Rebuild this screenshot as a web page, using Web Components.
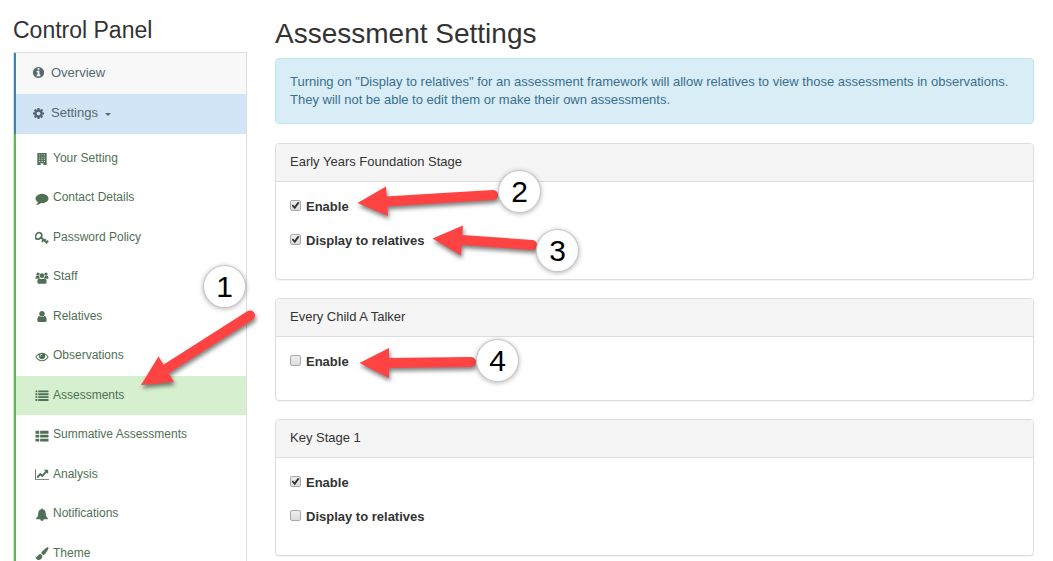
<!DOCTYPE html>
<html lang="en">
<head>
<meta charset="utf-8">
<meta name="viewport" content="width=device-width, initial-scale=1">
<title>Assessment Settings</title>
<style>
  html { scrollbar-width: none; }
  body { margin: 0; background: #fff; color: #333; font: 13px/18px "Liberation Sans", Arial, sans-serif; }
</style>
</head>
<body>
<settings-page>
  <side-nav slot="side" heading="Control Panel">
    <nav-item icon="info">Overview</nav-item>
    <nav-item icon="cog" open>Settings</nav-item>
    <sub-item slot="sub" icon="building">Your Setting</sub-item>
    <sub-item slot="sub" icon="comment">Contact Details</sub-item>
    <sub-item slot="sub" icon="key">Password Policy</sub-item>
    <sub-item slot="sub" icon="users">Staff</sub-item>
    <sub-item slot="sub" icon="user">Relatives</sub-item>
    <sub-item slot="sub" icon="eye">Observations</sub-item>
    <sub-item slot="sub" icon="list" current>Assessments</sub-item>
    <sub-item slot="sub" icon="thlist">Summative Assessments</sub-item>
    <sub-item slot="sub" icon="chart">Analysis</sub-item>
    <sub-item slot="sub" icon="bell">Notifications</sub-item>
    <sub-item slot="sub" icon="brush">Theme</sub-item>
  </side-nav>
  <page-title>Assessment Settings</page-title>
  <info-alert>Turning on "Display to relatives" for an assessment framework will allow relatives to view those assessments in observations. They will not be able to edit them or make their own assessments.</info-alert>
  <settings-panel heading="Early Years Foundation Stage">
    <check-row checked>Enable</check-row>
    <check-row checked>Display to relatives</check-row>
  </settings-panel>
  <settings-panel heading="Every Child A Talker">
    <check-row>Enable</check-row>
  </settings-panel>
  <settings-panel heading="Key Stage 1">
    <check-row checked>Enable</check-row>
    <check-row>Display to relatives</check-row>
  </settings-panel>
  <callout-layer slot="overlay">
    <callout-badge style="left:204px;top:266px">1</callout-badge>
    <callout-badge style="left:499px;top:171px">2</callout-badge>
    <callout-badge style="left:537px;top:230px">3</callout-badge>
    <callout-badge style="left:477px;top:340px">4</callout-badge>
  </callout-layer>
</settings-page>

<script>
const ICONS = {
  info: ['0 0 1792 1792', '<path d="M1152 1376v-160q0-14-9-23t-23-9h-96v-512q0-14-9-23t-23-9h-320q-14 0-23 9t-9 23v160q0 14 9 23t23 9h96v320h-96q-14 0-23 9t-9 23v160q0 14 9 23t23 9h448q14 0 23-9t9-23zm-128-896v-160q0-14-9-23t-23-9h-192q-14 0-23 9t-9 23v160q0 14 9 23t23 9h192q14 0 23-9t9-23zm640 416q0 209-103 385.500t-279.500 279.500-385.500 103-385.500-103-279.500-279.500-103-385.500 103-385.500 279.500-279.500 385.500-103 385.500 103 279.500 279.500 103 385.500z"/>'],
  cog: ['0 0 1792 1792', '<path d="M1152 896q0-106-75-181t-181-75-181 75-75 181 75 181 181 75 181-75 75-181zm512-109v222q0 12-8 23t-20 13l-185 28q-19 54-39 91 35 50 107 138 10 12 10 25t-9 23q-27 37-99 108t-94 71q-12 0-26-9l-138-108q-44 23-91 38-16 136-29 186-7 28-36 28h-222q-14 0-24.500-8.500t-11.500-21.500l-28-184q-49-16-90-37l-141 107q-10 9-25 9-14 0-25-11-126-114-165-168-7-10-7-23 0-12 8-23 15-21 51-66.500t54-70.500q-27-50-41-99l-183-27q-13-2-21-12.500t-8-23.500v-222q0-12 8-23t19-13l186-28q14-46 39-92-40-57-107-138-10-12-10-24 0-10 9-23 26-36 98.500-107.500t94.500-71.500q13 0 26 10l138 107q44-23 91-38 16-136 29-186 7-28 36-28h222q14 0 24.500 8.500t11.500 21.500l28 184q49 16 90 37l142-107q9-9 24-9 13 0 25 10 129 119 165 170 7 8 7 22 0 12-8 23-15 21-51 66.500t-54 70.500q26 50 41 98l183 28q13 2 21 12.500t8 23.500z"/>'],
  comment: ['0 0 1792 1792', '<path d="M1792 896q0 174-120 321.500t-326 233-450 85.500q-70 0-145-8-198 175-460 242-49 14-114 22-17 2-30.500-9t-17.500-29v-1q-3-4-.5-12t2-10 4.500-9.500l6-9 7-8.500 8-9q7-8 31-34.500t34.500-38 31-39.500 32.500-51 27-59 26-76q-157-89-247.500-220t-90.500-281q0-130 71-248.500t191-204.500 286-136.500 348-50.500q244 0 450 85.500t326 233 120 321.500z"/>'],
  user: ['0 0 1792 1792', '<path d="M1536 1399q0 109-62.500 187t-150.500 78h-854q-88 0-150.500-78t-62.500-187q0-85 8.500-160.500t31.500-152 58.500-131 94-89 134.500-34.500q131 128 313 128t313-128q76 0 134.500 34.500t94 89 58.500 131 31.500 152 8.500 160.500zm-256-887q0 159-112.500 271.500t-271.500 112.500-271.500-112.500-112.500-271.500 112.500-271.500 271.500-112.500 271.500 112.500 112.500 271.500z"/>'],
  eye: ['0 0 1792 1792', '<path d="M1664 960q-152-236-381-353 61 104 61 225 0 185-131.500 316.500t-316.500 131.500-316.500-131.500-131.500-316.500q0-121 61-225-229 117-381 353 133 205 333.500 326.500t434.500 121.500 434.500-121.500 333.500-326.500zm-720-384q0-20-14-34t-34-14q-125 0-214.500 89.500t-89.500 214.500q0 20 14 34t34 14 34-14 14-34q0-86 61-147t147-61q20 0 34-14t14-34zm848 384q0 34-20 69-140 230-376.500 368.500t-499.500 138.500-499.500-139-376.500-368q-20-35-20-69t20-69q140-229 376.500-368t499.500-139 499.500 139 376.500 368q20 35 20 69z"/>'],
  building: ['0 0 14 14', '<path fill-rule="evenodd" d="M2 1h10v13H8.500v-2h-3v2H2zM4 2.600v1h1v-1zm2.500 0v1h1v-1zm2.500 0v1h1v-1zM4 5v1h1V5zm2.500 0v1h1V5zM9 5v1h1V5zM4 7.400v1h1v-1zm2.500 0v1h1v-1zm2.500 0v1h1v-1zM4 9.800v1h1v-1zm2.500 0v1h1v-1zm2.500 0v1h1v-1z"/>'],
  key: ['1 1 13 12', '<g fill="none" stroke="currentColor"><path stroke-width="1.600" d="M1.600 7.600C.9 5.800 2 3.200 3.800 2.600c1.700-.6 3.300.4 3.500 1.900.2 1.900-1.500 3.800-3.200 4-1.200.2-2.200-.1-2.500-.9z"/><path stroke-width="1.700" d="M6.300 6.700l6 5.600M9 9.300l-1.600 1.700M11 8.600l-1.600 1.700M13.200 9.800l-1.700 1.900"/></g>'],
  users: ['0 0 14 14', '<circle cx="2.700" cy="3.300" r="1.800"/><circle cx="11.300" cy="3.300" r="1.800"/><path d="M0 8.200C0 5.500.8 5 1.600 5c.9.500 1.700.5 2.400.3 0 1 .2 1.500.7 2.200-.8 0-1.500.3-2 .9H.8c-.5 0-.8 0-.8-.2zM14 8.200c0-2.700-.8-3.200-1.600-3.200-.9.500-1.700.5-2.400.3 0 1-.2 1.500-.7 2.200.8 0 1.500.3 2 .9h1.900c.5 0 .8 0 .8-.2z"/><circle cx="7" cy="5" r="2.500"/><path d="M4.300 7.800c1.600 1.200 3.800 1.200 5.400 0 1.400 0 2.300 1.500 2.300 4 0 1.200-.7 1.900-1.800 1.900H3.800C2.700 13.700 2 13 2 11.800c0-2.500.9-4 2.300-4z"/>'],
  list: ['0 0 14 14', '<path d="M0 1.500h2v2H0zM3 1.500h11v2H3zM0 4.600h2v2H0zM3 4.600h11v2H3zM0 7.700h2v2H0zM3 7.700h11v2H3zM0 10.800h2v2H0zM3 10.800h11v2H3z"/>'],
  thlist: ['0 0 14 14', '<path d="M0 2h4v3H0zM5 2h9v3H5zM0 6.200h4v3H0zM5 6.200h9v3H5zM0 10.400h4v3H0zM5 10.400h9v3H5z"/>'],
  chart: ['0 0 16 14', '<path d="M0 1h1v11h15v1H0z"/><path d="M2.500 10.500L6 6.500l2.300 2.200 4.500-5" fill="none" stroke="currentColor" stroke-width="2.200"/><path d="M10 1.500H15V6.500z"/>'],
  bell: ['0 0 14 14', '<path d="M7 .3c.6 0 .9.400.8 1.100 2 .4 3.200 2 3.200 4.100 0 3 .8 4.500 2.500 5.900 0 .5-.4.800-.9.800H8.800c0 1-.8 1.700-1.800 1.700s-1.800-.7-1.800-1.700H1.400c-.5 0-.9-.3-.9-.8C2.200 10 3 8.500 3 5.500c0-2.100 1.200-3.700 3.200-4.100C6.100.7 6.400.3 7 .3z"/>'],
  brush: ['0 0 14 14', '<path d="M12.800.2c.8 0 1.300.5 1.200 1.200-.2.900-2.700 5.300-4 6.400-.8.700-1.500.8-2.200.6L6.200 6.800c0-.7.200-1.200.9-1.900C8.500 3.700 12 .2 12.800.2zM5.600 7.500l1.800 1.900c.1 2.400-1.200 4.300-3.700 4.500C1.400 14 .3 12.600 0 10.200c.7.500 1.300.7 1.800.3.800-2 2-3 3.800-3z"/>']
};
const icon = n => `<svg class="icon" viewBox="${ICONS[n][0]}" fill="currentColor" aria-hidden="true">${ICONS[n][1]}</svg>`;

class Base extends HTMLElement {
  connectedCallback() {
    if (!this.shadowRoot) this.attachShadow({ mode: 'open' }).innerHTML = this.view();
  }
}

customElements.define('settings-page', class extends Base {
  view() { return `<style>
    :host { display: grid; grid-template-columns: 234px minmax(0, 1fr); column-gap: 28px; padding: 18px 19px 0 13px; position: relative; }
    main { padding-top: 1px; }
  </style><slot name="side"></slot><main><slot></slot></main><slot name="overlay"></slot>`; }
});

customElements.define('side-nav', class extends Base {
  view() { return `<style>
    :host { display: block; }
    h2 { margin: 0 0 10px; font-size: 23px; line-height: 24px; font-weight: 400; }
    nav { border: 1px solid #ddd; }
    .top { display: grid; grid-template-rows: 41px 40px; border-left: 2px solid #3a87ad; }
    .sub { display: grid; grid-auto-rows: 39px 40px; padding: 5px 0; border-left: 2px solid #5cb850; }
  </style><h2>${this.getAttribute('heading')}</h2>
  <nav><div class="top"><slot></slot></div><div class="sub"><slot name="sub"></slot></div></nav>`; }
});

customElements.define('nav-item', class extends Base {
  view() { const open = this.hasAttribute('open'); return `<style>
    :host { display: grid; background: #f8f8f8; }
    :host([open]) { background: #d2e5f6; }
    a { display: flex; align-items: center; padding: 0 16px 2px; color: #566870; text-decoration: none; }
    .icon { width: 13px; height: 13px; margin-right: 6px; }
    .caret { margin: 3px 0 0 7px; border: 3px solid transparent; border-top-color: currentColor; border-bottom: 0; }
  </style><a href="#"${open ? ' aria-expanded="true"' : ''}>${icon(this.getAttribute('icon'))}<slot></slot>${open ? '<span class="caret"></span>' : ''}</a>`; }
});

customElements.define('sub-item', class extends Base {
  view() { return `<style>
    :host { display: grid; font-size: 12px; }
    :host([current]) { background: #d6efcf; }
    a { display: flex; align-items: center; padding: 0 19px 2px; color: #4f7054; text-decoration: none; }
    .icon { width: 14px; height: 13px; margin: 2px 4px 0 0; }
  </style><a href="#"${this.hasAttribute('current') ? ' aria-current="page"' : ''}>${icon(this.getAttribute('icon'))}<slot></slot></a>`; }
});

customElements.define('page-title', class extends Base {
  view() { return `<style>
    :host { display: block; margin-bottom: 9px; }
    h1 { margin: 0; font-size: 28px; line-height: 30px; font-weight: 400; }
  </style><h1><slot></slot></h1>`; }
});

customElements.define('info-alert', class extends Base {
  view() { return `<style>
    :host { display: block; margin-bottom: 19px; padding: 14px; border: 1px solid #bce8f1; border-radius: 4px; background: #d9edf7; color: #3a6f8f; }
  </style><div role="note"><slot></slot></div>`; }
});

customElements.define('settings-panel', class extends Base {
  view() { return `<style>
    :host { display: block; margin-bottom: 18px; border: 1px solid #ddd; border-radius: 4px; background: #fff; box-shadow: 0 1px 1px rgba(0,0,0,.05); }
    h3 { margin: 0; padding: 9px 14px 10px; border-bottom: 1px solid #ddd; border-radius: 3px 3px 0 0; background: #f5f5f5; font-size: 13px; line-height: 18px; font-weight: 400; }
    .body { padding: 15px 14px 14px; }
  </style><section><h3>${this.getAttribute('heading')}</h3><div class="body"><slot></slot></div></section>`; }
});

customElements.define('check-row', class extends Base {
  view() { return `<style>
    :host { display: block; margin-bottom: 14px; }
    label { display: flex; align-items: center; height: 20px; font-weight: 700; }
    input { appearance: none; box-sizing: border-box; display: grid; place-items: center; width: 11px; height: 11px; margin: 0 5px 3px 0; border: 1px solid #a8a8a8; border-radius: 2px; background: linear-gradient(#eee, #dcdcdc); }
    input:checked::before { content: ""; width: 8px; height: 8px; background: #333; clip-path: polygon(0 50%, 18% 36%, 38% 58%, 80% 2%, 100% 16%, 42% 96%); }
  </style><label><input type="checkbox"${this.hasAttribute('checked') ? ' checked' : ''}><slot></slot></label>`; }
});

customElements.define('callout-layer', class extends Base {
  view() { return `<style>
    :host { display: block; position: absolute; inset: 0; overflow: hidden; pointer-events: none; }
    svg { position: absolute; left: 0; top: 0; width: 600px; height: 420px; }
    g { fill: #ff4343; stroke: #ff4343; stroke-linecap: round; filter: drop-shadow(1px 3px 2px rgba(0,0,0,.5)); }
    path { stroke: none; }
    line { stroke-width: 10; }
  </style><svg viewBox="0 0 600 420" aria-hidden="true">
    <g><path d="M141 385L158.500 356.500L174 382z"/><line x1="166" y1="369" x2="250" y2="315.500"/></g>
    <g><path d="M357.500 203L386 186.500L388 216z"/><line x1="386" y1="201.500" x2="493" y2="195"/></g>
    <g><path d="M432.500 238.500L463 225.500L461 255.500z"/><line x1="462" y1="240" x2="532" y2="245"/></g>
    <g><path d="M359.500 363L389 348V378z"/><line x1="388" y1="363" x2="471" y2="362"/></g>
  </svg><slot></slot>`; }
});

customElements.define('callout-badge', class extends Base {
  view() { return `<style>
    :host { position: absolute; display: grid; place-items: center; width: 41px; height: 41px; border-radius: 50%; background: #fff; color: #000; font-size: 30px; line-height: 40px; box-shadow: 0 0 0 1px #c8c8c8, 0 1px 5px 1px rgba(0,0,0,.3); }
  </style><slot></slot>`; }
});
</script>
</body>
</html>
